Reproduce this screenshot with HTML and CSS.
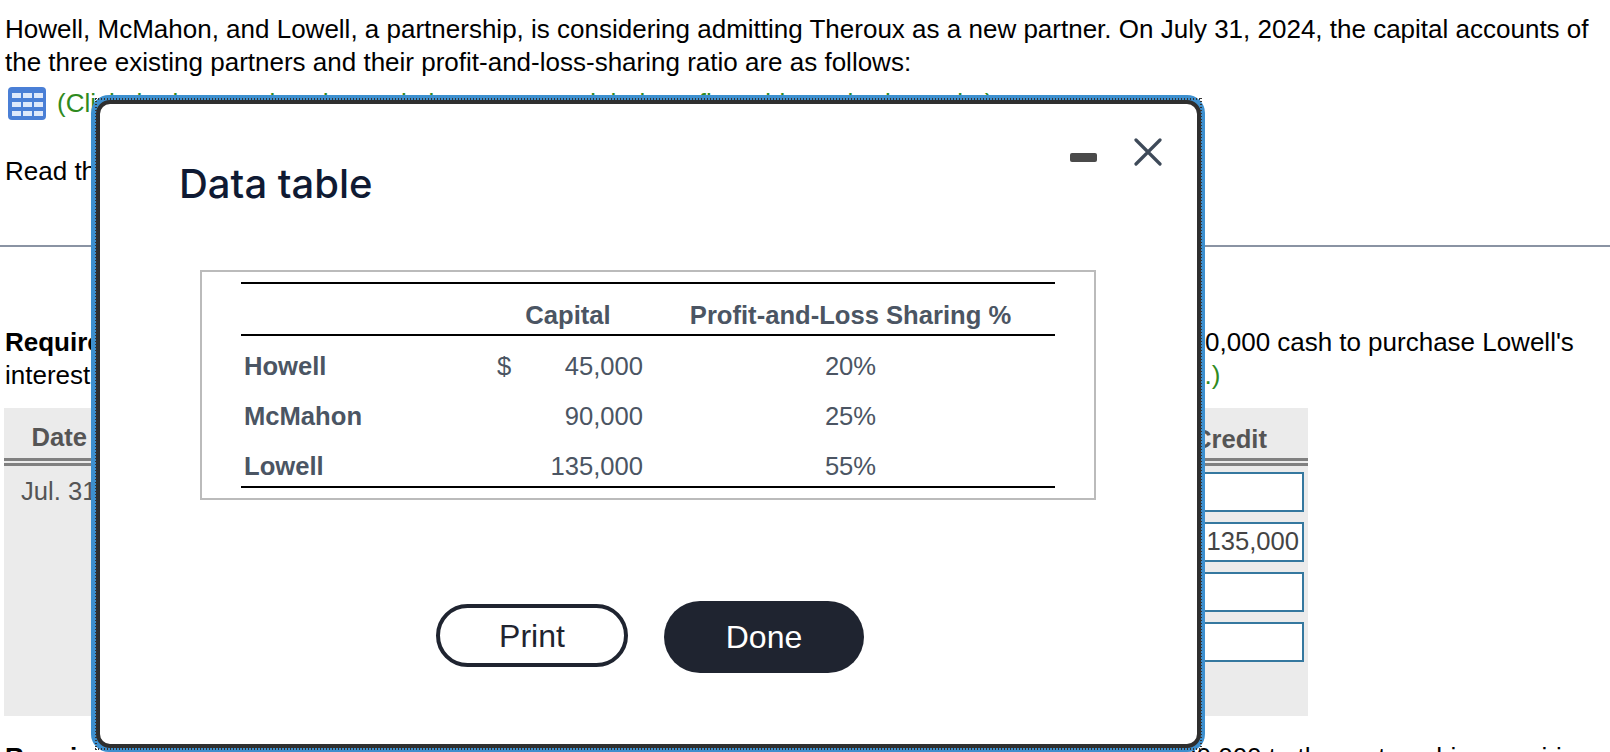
FILE: index.html
```html
<!DOCTYPE html>
<html lang="en">
<head>
<meta charset="utf-8">
<title>Data table</title>
<link rel="stylesheet" href="styles.css">
</head>
<body>
<main class="page">
  <p class="intro">Howell, McMahon, and Lowell, a partnership, is considering admitting Theroux as a new partner. On July 31, 2024, the capital accounts of the three existing partners and their profit-and-loss-sharing ratio are as follows:</p>
  <p class="link-line">
    <svg class="grid-icon" viewBox="0 0 38 33" aria-hidden="true">
      <rect width="38" height="33" rx="4" fill="#4a7fd6"/>
      <g fill="#dfe9fb">
        <rect x="4" y="6" width="9" height="5"/><rect x="15" y="6" width="9" height="5"/><rect x="26" y="6" width="9" height="5"/>
        <rect x="4" y="15" width="9" height="5"/><rect x="15" y="15" width="9" height="5"/><rect x="26" y="15" width="9" height="5"/>
        <rect x="4" y="24" width="9" height="5"/><rect x="15" y="24" width="9" height="5"/><rect x="26" y="24" width="9" height="5"/>
      </g>
    </svg>
    <span class="green">(Click the icon to view the capital accounts and their profit-and-loss-sharing ratio.)</span>
  </p>
  <p class="read">Read the requirements.</p>
  <hr class="rule">
  <p class="req"><b>Requirement 1.</b> Journalize the admission of Theroux into the partnership once Theroux pays Lowell $150,000 cash to purchase Lowell's<br>interest in the partnership. <span class="green">(Record debits first, and credits. Exclude explanations from the journal entries.)</span></p>
  <section class="journal">
    <div class="j-head">
      <div class="j-date">Date</div>
      <div class="j-acct">Accounts</div>
      <div class="j-debit">Debit</div>
      <div class="j-credit">Credit</div>
    </div>
    <div class="j-body">
      <div class="j-when">Jul. 31</div>
      <div class="j-inputs">
        <div class="cell"></div>
        <div class="cell">135,000</div>
        <div class="cell"></div>
        <div class="cell"></div>
      </div>
    </div>
  </section>
  <p class="req2"><b>Requirement 2.</b> Journalize the admission of Theroux into the partnership once Theroux contributes $120,000 to the partnership, acquiring</p>
</main>

<div class="modal" role="dialog" aria-label="Data table">
  <div class="modal-inner">
    <header class="modal-head">
      <h1 class="modal-title">Data table</h1>
      <div class="controls">
        <span class="minimize"></span>
        <svg class="close" viewBox="0 0 28 28" aria-hidden="true">
          <path d="M2 2 L26 26 M26 2 L2 26" stroke="#3e4a59" stroke-width="3.2" stroke-linecap="round" fill="none"/>
        </svg>
      </div>
    </header>
    <div class="data-box">
      <table class="data">
        <colgroup>
          <col class="w-name"><col class="w-sym"><col class="w-amt"><col>
        </colgroup>
        <thead>
          <tr>
            <th class="c-name"></th>
            <th colspan="2" class="c-cap">Capital</th>
            <th class="c-pct">Profit-and-Loss Sharing %</th>
          </tr>
        </thead>
        <tbody>
          <tr><th class="c-name">Howell</th><td class="c-sym">$</td><td class="c-amt">45,000</td><td class="c-pct">20%</td></tr>
          <tr><th class="c-name">McMahon</th><td class="c-sym"></td><td class="c-amt">90,000</td><td class="c-pct">25%</td></tr>
          <tr><th class="c-name">Lowell</th><td class="c-sym"></td><td class="c-amt">135,000</td><td class="c-pct">55%</td></tr>
        </tbody>
      </table>
    </div>
    <div class="actions">
      <button class="btn btn-print" type="button">Print</button>
      <button class="btn btn-done" type="button">Done</button>
    </div>
  </div>
</div>
</body>
</html>
```
FILE: styles.css
```css
* { box-sizing: border-box; }
html, body { margin: 0; height: 752px; overflow: hidden; background: #fff; }
body { font-family: "Liberation Sans", Arial, sans-serif; color: #000; position: relative; }
p { margin: 0; }
.page { padding: 13px 0 0 5px; font-size: 26px; line-height: 33px; }
.intro { width: 1600px; }
.green { color: #2f8a1e; }
.link-line { display: flex; align-items: center; gap: 11px; margin: 8px 0 0 3px; height: 33px; white-space: nowrap; }
.grid-icon { width: 38px; height: 33px; flex: none; }
.read { margin-top: 35px; }
.rule { margin: 57px 0 0 -5px; border: 0; height: 2px; background: #8a93a3; }
.req { margin-top: 79px; white-space: nowrap; word-spacing: -0.1px; }
.journal { margin: 16px 0 0 -1px; width: 1304px; height: 308px; background: #ebebeb; color: #555; font-size: 25.6px; }
.j-head { display: flex; height: 58px; padding-top: 13px; font-weight: bold; border-bottom: 3px solid #808080; position: relative; }
.j-head::after { content: ""; position: absolute; left: 0; right: 0; bottom: 2px; height: 3px; background: #808080; }
.j-date { width: 83px; text-align: right; }
.j-acct { width: 700px; text-align: center; }
.j-debit { width: 281px; text-align: center; }
.j-credit { width: 199px; padding-top: 2px; text-align: right; }
.j-body { position: relative; padding: 9px 0 0 17px; }
.j-inputs { position: absolute; top: 6px; right: 4px; width: 110px; display: flex; flex-direction: column; gap: 10px; }
.cell { height: 40px; border: 2px solid #35789f; background: #fff; color: #444; text-align: right; padding-right: 3px; line-height: 35px; }
.req2 { margin-top: 25px; white-space: nowrap; word-spacing: -0.1px; }

.modal { position: absolute; left: 91px; top: 95px; width: 1114px; height: 657px; padding: 5px 4px 4px 5px; background: #3d8fce; border-radius: 18px; }
.modal::after { content: ""; position: absolute; inset: 3px 3px 2px 4px; pointer-events: none;
  background:
    linear-gradient(90deg, #333 50%, transparent 50%) left top / 3px 2px repeat-x,
    linear-gradient(90deg, #333 50%, transparent 50%) left bottom / 3px 2px repeat-x,
    linear-gradient(180deg, #333 50%, transparent 50%) left top / 2px 3px repeat-y,
    linear-gradient(180deg, #333 50%, transparent 50%) right top / 2px 3px repeat-y; }
.modal-inner { height: 100%; background: #fff; border: 4px solid #2f2f2f; border-radius: 14px; display: flex; flex-direction: column; }
.modal-head { display: flex; justify-content: space-between; height: 166px; padding-left: 79px; }
.modal-title { margin: 53px 0 0; font: 500 40px/54px Inter, "Liberation Sans", sans-serif; color: #0f1a33; }
.controls { display: flex; gap: 37px; padding: 34px 35px 0 0; align-items: flex-start; }
.minimize { width: 27px; height: 9px; margin-top: 15px; background: #4a4a4a; border-radius: 2px; }
.close { width: 28px; height: 28px; display: block; }
.data-box { margin-left: 100px; width: 896px; height: 230px; border: 2px solid #bbb; padding: 10px 39px 0; }
.data { width: 814px; table-layout: fixed; border-collapse: collapse; font-size: 25.6px; color: #4b5563; border-bottom: 2px solid #000; }
.w-name { width: 249px; }
.w-sym { width: 30px; }
.w-amt { width: 126px; }
.data thead tr { border-top: 2px solid #000; border-bottom: 2px solid #000; }
.data th, .data td { padding: 10px 0 0; height: 50.67px; font-weight: 400; line-height: 30px; white-space: nowrap; }
.data thead th { height: 52px; padding-top: 11px; }
.data th { font-weight: 700; }
.data .c-name { text-align: left; padding-left: 3px; }
.data .c-sym { padding-left: 7px; }
.data .c-amt { text-align: right; padding-right: 3px; }
.data .c-cap, .data .c-pct { text-align: center; }
.actions { display: flex; align-items: flex-start; gap: 36px; margin: 101px 0 0 336px; }
.btn { font: 400 32px/1 "Liberation Sans", sans-serif; border-radius: 37px; }
.btn-print { width: 192px; height: 63px; margin-top: 3px; background: #fff; color: #1f2430; border: 4px solid #1f2430; }
.btn-done { width: 200px; height: 72px; background: #1f2430; color: #fff; border: 0; }
```
